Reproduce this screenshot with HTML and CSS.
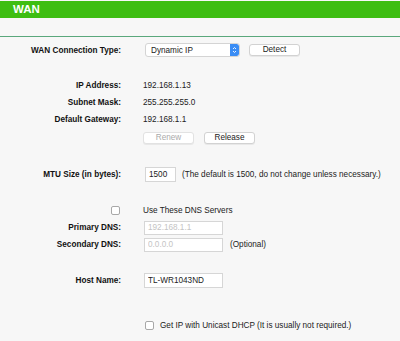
FILE: index.html
```html
<!DOCTYPE html>
<html lang="en">
<head>
    <meta charset="UTF-8">
    <title>WAN</title>
    <link rel="stylesheet" href="styles.css">
</head>
<body>
    <div class="title-bar">WAN</div>
    <div class="rule"></div>

    <div class="form">
        <div class="row row-type">
            <div class="label">WAN Connection Type:</div>
            <div class="field">
                <div class="select">
                    <span>Dynamic IP</span>
                    <span class="stepper">
                        <svg width="5" height="8" viewBox="0 0 5 8"><path d="M1 3 L2.5 1.5 L4 3 M1 5 L2.5 6.5 L4 5" fill="none" stroke="#fff" stroke-width="0.9"/></svg>
                    </span>
                </div>
                <button class="btn btn-detect">Detect</button>
            </div>
        </div>

        <div class="info">
            <div class="row row-info">
                <div class="label">IP Address:</div>
                <div class="field">192.168.1.13</div>
            </div>
            <div class="row row-info">
                <div class="label">Subnet Mask:</div>
                <div class="field">255.255.255.0</div>
            </div>
            <div class="row row-info">
                <div class="label">Default Gateway:</div>
                <div class="field">192.168.1.1</div>
            </div>
            <div class="row row-buttons">
                <div class="label"></div>
                <div class="field">
                    <button class="btn btn-renew" disabled>Renew</button>
                    <button class="btn btn-release">Release</button>
                </div>
            </div>
        </div>

        <div class="row row-mtu">
            <div class="label">MTU Size (in bytes):</div>
            <div class="field">
                <input class="input input-mtu" type="text" value="1500">
                <span class="note">(The default is 1500, do not change unless necessary.)</span>
            </div>
        </div>

        <div class="row row-check">
            <div class="label"><span class="checkbox"></span></div>
            <div class="field">Use These DNS Servers</div>
        </div>
        <div class="row row-dns first-dns">
            <div class="label">Primary DNS:</div>
            <div class="field"><input class="input input-wide" type="text" value="192.168.1.1" disabled></div>
        </div>
        <div class="row row-dns">
            <div class="label">Secondary DNS:</div>
            <div class="field">
                <input class="input input-wide" type="text" value="0.0.0.0" disabled>
                <span class="note optional">(Optional)</span>
            </div>
        </div>

        <div class="row row-host">
            <div class="label">Host Name:</div>
            <div class="field"><input class="input input-wide" type="text" value="TL-WR1043ND"></div>
        </div>

        <div class="row row-unicast">
            <div class="label"></div>
            <div class="field">
                <span class="checkbox"></span>
                <span class="unicast-text">Get IP with Unicast DHCP (It is usually not required.)</span>
            </div>
        </div>
    </div>
</body>
</html>
```

FILE: styles.css
```css
body {
    margin: 0;
    background: #f7f7f7;
    font-family: 'Liberation Sans', Arial, sans-serif;
    font-size: 8.2px;
    color: #222;
    width: 400px;
    height: 341px;
    overflow: hidden;
}

.title-bar {
    margin-top: 1px;
    height: 17px;
    line-height: 17px;
    background: #3ebe12;
    color: #fff;
    font-weight: bold;
    font-size: 11.5px;
    padding-left: 13px;
}

.rule {
    margin-top: 18px;
    height: 1px;
    background: #5aa87c;
}

.form {
    padding-top: 6px;
}

.row {
    display: flex;
    align-items: center;
}

.label {
    width: 121px;
    flex: none;
    text-align: right;
    font-weight: bold;
    color: #111;
    display: flex;
    justify-content: flex-end;
    align-items: center;
}

.field {
    margin-left: 22px;
    display: flex;
    align-items: center;
    color: #222;
}

.row-type {
    height: 14px;
}

.select {
    margin-left: 2px;
    width: 95px;
    height: 14px;
    box-sizing: border-box;
    background: #fff;
    border: 1px solid #d4d4d4;
    border-radius: 3px;
    display: flex;
    align-items: center;
    justify-content: space-between;
    padding-left: 5px;
    color: #222;
    overflow: hidden;
}

.stepper {
    width: 9px;
    height: 12px;
    background: #3a8df5;
    display: flex;
    align-items: center;
    justify-content: center;
    border-radius: 0 2px 2px 0;
}

.btn {
    font-family: 'Liberation Sans', Arial, sans-serif;
    font-size: 8.2px;
    height: 12px;
    padding: 0;
    background: #fff;
    color: #222;
    border: 1px solid #d2d2d2;
    border-radius: 3px;
    box-shadow: 0 1px 0 rgba(0, 0, 0, 0.06);
    line-height: 10px;
}

.btn-detect {
    margin-left: 9px;
    width: 51px;
}

.info {
    margin-top: 20px;
}

.row-info {
    height: 17px;
}

.row-buttons {
    height: 20px;
}

.btn-renew {
    width: 51px;
    color: #aaa;
    border-color: #e2e2e2;
}

.btn-release {
    margin-left: 10px;
    width: 51px;
}

.input {
    font-family: 'Liberation Sans', Arial, sans-serif;
    font-size: 8.2px;
    box-sizing: border-box;
    background: #fff;
    border: 1px solid #d6d6d6;
    margin: 0;
    padding: 0 0 0 3px;
    color: #222;
    outline: none;
}

.input:disabled {
    color: #c4c4c4;
}

.row-mtu {
    margin-top: 19px;
    height: 14px;
}

.input-mtu {
    margin-left: 2px;
    width: 31px;
    height: 15px;
}

.note {
    margin-left: 6px;
}

.row-check {
    margin-top: 22px;
    height: 14px;
}

.checkbox {
    display: inline-block;
    width: 7px;
    height: 7px;
    background: #fff;
    border: 1px solid #a8a8a8;
    border-radius: 2px;
}

.row-check .checkbox {
    margin-right: 1px;
}

.row-dns {
    height: 17px;
}

.first-dns {
    margin-top: 2px;
}

.input-wide {
    width: 79px;
    height: 14px;
    margin-left: 1px;
}

.optional {
    margin-left: 7px;
}

.row-host {
    margin-top: 20px;
    height: 15px;
}

.row-host .input-wide {
    height: 15px;
}

.row-unicast {
    margin-top: 30px;
    height: 14px;
}

.row-unicast .checkbox {
    margin-left: 2px;
}

.unicast-text {
    margin-left: 6px;
}
```
